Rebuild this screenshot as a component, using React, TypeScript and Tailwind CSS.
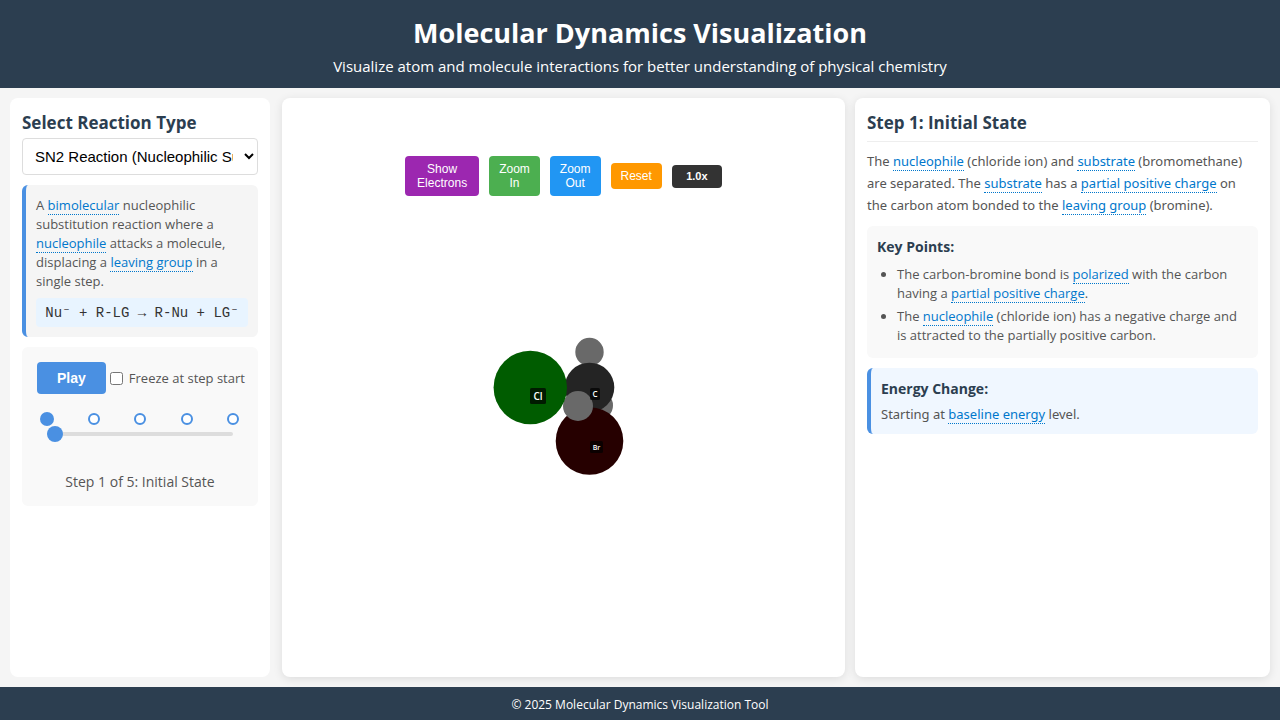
import { useState, type ReactNode } from 'react';

const STEPS = [
  'Initial State',
  'Nucleophile Approach',
  'Transition State',
  'Bond Breaking',
  'Products',
];

function Term({ children }: { children: ReactNode }) {
  return (
    <span className="cursor-help border-b border-dotted border-[#0077cc] text-[#0077cc]">
      {children}
    </span>
  );
}

function AtomLabel({
  x,
  y,
  w,
  h,
  size,
  text,
}: {
  x: number;
  y: number;
  w: number;
  h: number;
  size: number;
  text: string;
}) {
  return (
    <g>
      <rect x={x} y={y} width={w} height={h} rx="1.5" fill="#000" fillOpacity="0.7" />
      <text
        x={x + w / 2}
        y={y + h / 2 + size * 0.36}
        fontSize={size}
        fontWeight="600"
        textAnchor="middle"
        fill="#fff"
      >
        {text}
      </text>
    </g>
  );
}

function Molecule() {
  return (
    <svg viewBox="0 0 200 200" className="size-[200px]" role="img" aria-label="Molecule view">
      <circle cx="135" cy="117.5" r="14" fill="#696969" />
      <circle cx="125.5" cy="64" r="14.2" fill="#696969" />
      <circle cx="125.5" cy="99.5" r="24.8" fill="#242424" />
      <circle cx="125.5" cy="153" r="33.8" fill="#260000" />
      <circle cx="114" cy="118" r="15" fill="#696969" />
      <circle cx="66.3" cy="99.5" r="36.7" fill="#005c00" />
      <AtomLabel x={66} y={100} w={16} h={16} size={10} text="Cl" />
      <AtomLabel x={126} y={100} w={10} h={12} size={8} text="C" />
      <AtomLabel x={126} y={153} w={13} h={12} size={7} text="Br" />
    </svg>
  );
}

export default function App() {
  const [step, setStep] = useState(0);
  const [playing, setPlaying] = useState(false);
  const [zoom, setZoom] = useState(1);

  return (
    <div className="flex min-h-screen flex-col bg-[#f5f5f5] font-['Open_Sans','Noto_Sans',sans-serif] text-[#333]">
      <header className="bg-[#2c3e50] px-4 pt-3 pb-2.5 text-center text-white">
        <h1 className="text-[27px] leading-[42px] font-bold">Molecular Dynamics Visualization</h1>
        <p className="text-[15px] leading-6">
          Visualize atom and molecule interactions for better understanding of physical chemistry
        </p>
      </header>

      <main className="flex flex-1 p-2.5">
        <aside className="mr-3 w-[260px] shrink-0 rounded-lg bg-white p-3">
          <h2 className="text-[17px] leading-[26px] font-bold text-[#2c3e50]">
            <label htmlFor="reaction">Select Reaction Type</label>
          </h2>
          <select
            id="reaction"
            className="mt-0.5 h-[37px] w-full rounded border border-[#ddd] bg-white px-2 font-['Liberation_Sans',Arial,sans-serif] text-[15px] text-black"
          >
            <option>SN2 Reaction (Nucleophilic Substitution)</option>
            <option>SN1 Reaction</option>
            <option>E2 Elimination</option>
          </select>

          <section className="mt-2.5 rounded-md border-l-4 border-[#4a90e2] bg-[#f5f5f5] px-2.5 pt-[11px] pb-2.5 text-[13px] leading-[19px] text-[#555]">
            <p>
              A <Term>bimolecular</Term> nucleophilic substitution reaction where a{' '}
              <Term>nucleophile</Term> attacks a molecule, displacing a <Term>leaving group</Term>{' '}
              in a single step.
            </p>
            <p className="mt-[7px] rounded bg-[#e8f4ff] pt-1.5 pb-1 text-center font-['Liberation_Mono',monospace] text-sm leading-[19px] whitespace-nowrap text-[#333]">
              Nu⁻ + R-LG → R-Nu + LG⁻
            </p>
          </section>

          <section className="mt-2.5 rounded-md bg-[#f9f9f9] px-[15px] pt-[15px] pb-3.5 text-[13px] text-[#555]">
            <div className="flex items-center gap-1">
              <button
                type="button"
                onClick={() => setPlaying(!playing)}
                className="h-8 rounded bg-[#4a90e2] px-5 font-['Liberation_Sans',Arial,sans-serif] text-sm font-bold text-white"
              >
                {playing ? 'Pause' : 'Play'}
              </button>
              <label className="flex items-center gap-1.5 whitespace-nowrap">
                <input type="checkbox" className="size-[13px]" />
                <span className="pt-0.5">Freeze at step start</span>
              </label>
            </div>
            <div className="mt-[18px] flex h-3.5 items-center justify-between px-1">
              {STEPS.map((name, i) => (
                <span key={name} className="flex w-3 justify-center">
                  <button
                    type="button"
                    aria-label={name}
                    onClick={() => setStep(i)}
                    className={
                      i === step
                        ? 'size-3.5 shrink-0 rounded-full bg-[#4a90e2]'
                        : 'size-3 shrink-0 rounded-full border-2 border-[#4a90e2] bg-white'
                    }
                  />
                </span>
              ))}
            </div>
            <div className="flex h-4 items-center px-2.5">
              <input
                type="range"
                aria-label="Reaction step"
                min={0}
                max={4}
                value={step}
                onChange={(e) => setStep(Number(e.target.value))}
                className="h-1 w-full appearance-none rounded-sm bg-[#ddd] [&::-webkit-slider-thumb]:size-4 [&::-webkit-slider-thumb]:appearance-none [&::-webkit-slider-thumb]:rounded-full [&::-webkit-slider-thumb]:bg-[#4a90e2]"
              />
            </div>
            <p className="mt-[30px] text-center text-sm leading-5">
              Step {step + 1} of {STEPS.length}: {STEPS[step]}
            </p>
          </section>
        </aside>

        <section className="relative mr-2.5 flex min-w-0 flex-1 items-center justify-center rounded-lg bg-white shadow-[0_2px_10px_rgba(0,0,0,0.1)]">
          <Molecule />
          <div className="absolute inset-x-0 top-[58px] flex items-center justify-center gap-2.5 font-['Liberation_Sans',Arial,sans-serif] text-xs leading-[14px] font-medium text-white">
            <button type="button" className="rounded bg-[#9c27b0] px-3 py-1.5">
              Show
              <br />
              Electrons
            </button>
            <button
              type="button"
              onClick={() => setZoom(zoom + 0.1)}
              className="rounded bg-[#4caf50] px-2.5 py-1.5"
            >
              Zoom
              <br />
              In
            </button>
            <button
              type="button"
              onClick={() => setZoom(zoom - 0.1)}
              className="rounded bg-[#2196f3] px-2.5 py-1.5"
            >
              Zoom
              <br />
              Out
            </button>
            <button
              type="button"
              onClick={() => setZoom(1)}
              className="rounded bg-[#ff9800] px-2.5 py-1.5"
            >
              Reset
            </button>
            <output className="w-[50px] rounded bg-[#333] py-1 text-center text-[11px] leading-[15px] font-bold">
              {zoom.toFixed(1)}x
            </output>
          </div>
        </section>

        <aside className="w-[415px] shrink-0 rounded-lg bg-white p-3 shadow-[0_2px_10px_rgba(0,0,0,0.1)]">
          <h2 className="border-b border-[#eee] pb-[5px] text-[17px] leading-[26px] font-bold text-[#2c3e50]">
            Step {step + 1}: {STEPS[step]}
          </h2>
          <p className="mt-2 font-['Noto_Sans',sans-serif] text-[13px] leading-[22px] text-[#555]">
            The <Term>nucleophile</Term> (chloride ion) and <Term>substrate</Term> (bromomethane)
            are separated. The <Term>substrate</Term> has a <Term>partial positive charge</Term> on
            the carbon atom bonded to the <Term>leaving group</Term> (bromine).
          </p>
          <section className="mt-2.5 rounded-md bg-[#f9f9f9] p-2.5">
            <h3 className="text-sm leading-[22px] font-bold text-[#2c3e50]">Key Points:</h3>
            <ul className="mt-[7px] list-disc space-y-1 pb-[3px] pl-5 text-[13px] leading-[19px] text-[#555]">
              <li>
                The carbon-bromine bond is <Term>polarized</Term> with the carbon having a{' '}
                <Term>partial positive charge</Term>.
              </li>
              <li>
                The <Term>nucleophile</Term> (chloride ion) has a negative charge and is attracted
                to the partially positive carbon.
              </li>
            </ul>
          </section>
          <section className="mt-2.5 rounded-md border-l-4 border-[#4a90e2] bg-[#f0f7ff] p-2.5">
            <h3 className="text-sm leading-[22px] font-bold text-[#2c3e50]">Energy Change:</h3>
            <p className="mt-1 font-['Noto_Sans',sans-serif] text-[13px] leading-5 text-[#555]">
              Starting at <Term>baseline energy</Term> level.
            </p>
          </section>
        </aside>
      </main>

      <footer className="bg-[#2c3e50] pt-2 pb-1.5 text-center text-xs leading-[19px] text-white">
        © 2025 Molecular Dynamics Visualization Tool
      </footer>
    </div>
  );
}
